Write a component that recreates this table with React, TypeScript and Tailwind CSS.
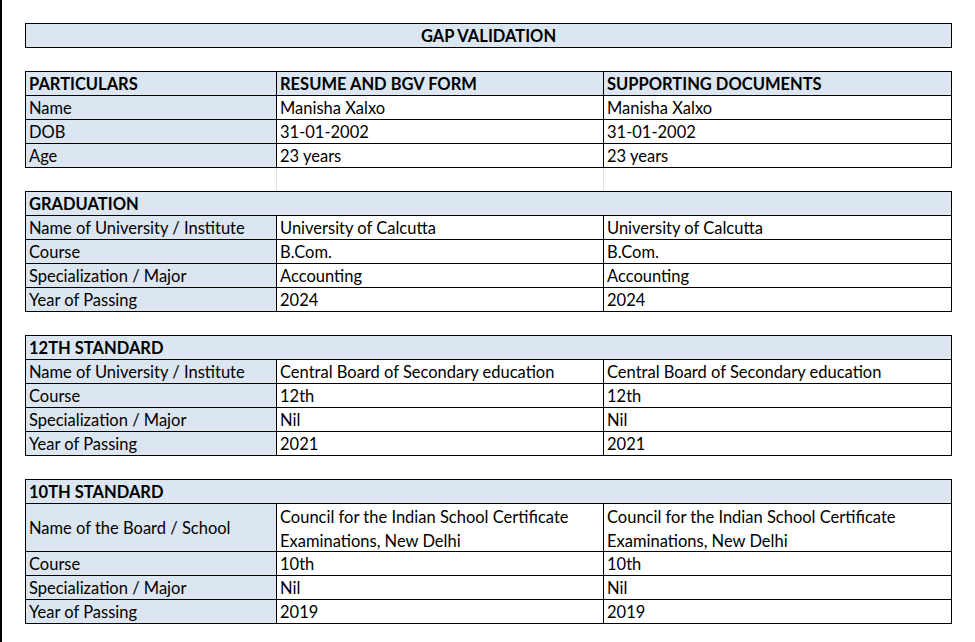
import React from "react";

type Row = { label: string; resume: React.ReactNode; docs: React.ReactNode; tall?: boolean };

type Section = { title: string; rows: Row[] };

const sections: Section[] = [
  {
    title: "GRADUATION",
    rows: [
      { label: "Name of University / Institute", resume: "University of Calcutta", docs: "University of Calcutta" },
      { label: "Course", resume: "B.Com.", docs: "B.Com." },
      { label: "Specialization / Major", resume: "Accounting", docs: "Accounting" },
      { label: "Year of Passing", resume: "2024", docs: "2024" },
    ],
  },
  {
    title: "12TH STANDARD",
    rows: [
      {
        label: "Name of University / Institute",
        resume: "Central Board of Secondary education",
        docs: "Central Board of Secondary education",
      },
      { label: "Course", resume: "12th", docs: "12th" },
      { label: "Specialization / Major", resume: "Nil", docs: "Nil" },
      { label: "Year of Passing", resume: "2021", docs: "2021" },
    ],
  },
  {
    title: "10TH STANDARD",
    rows: [
      {
        label: "Name of the Board / School",
        resume: (
          <>
            Council for the Indian School Certificate
            <br />
            Examinations, New Delhi
          </>
        ),
        docs: (
          <>
            Council for the Indian School Certificate
            <br />
            Examinations, New Delhi
          </>
        ),
        tall: true,
      },
      { label: "Course", resume: "10th", docs: "10th" },
      { label: "Specialization / Major", resume: "Nil", docs: "Nil" },
      { label: "Year of Passing", resume: "2019", docs: "2019" },
    ],
  },
];

const cell = "shrink-0 border-r border-black pl-[3px] whitespace-nowrap";

function DataRow({ row }: { row: Row }) {
  if (row.tall) {
    return (
      <div className="flex h-[48px] border-b border-black">
        <div className={`${cell} w-[251px] bg-[#dce6f1] flex items-center pt-[2px] leading-[23px]`}>{row.label}</div>
        <div className={`${cell} w-[327px] pt-[1px] leading-[24px]`}>{row.resume}</div>
        <div className={`${cell} w-[348px] pt-[1px] leading-[24px]`}>{row.docs}</div>
      </div>
    );
  }
  return (
    <div className="flex h-[24px] border-b border-black leading-[25px]">
      <div className={`${cell} w-[251px] bg-[#dce6f1]`}>{row.label}</div>
      <div className={`${cell} w-[327px]`}>{row.resume}</div>
      <div className={`${cell} w-[348px]`}>{row.docs}</div>
    </div>
  );
}

function SectionTable({ section }: { section: Section }) {
  return (
    <div className="w-[927px] border-l border-t border-black">
      <div className="h-[24px] border-b border-r border-black bg-[#dce6f1] pl-[3px] font-bold leading-[25px]">
        {section.title}
      </div>
      {section.rows.map((row) => (
        <DataRow key={row.label} row={row} />
      ))}
    </div>
  );
}

export default function App() {
  return (
    <div className="flex h-[642px] w-[975px] overflow-hidden bg-white font-['Lato',sans-serif] text-[16.5px] text-black">
      <div className="h-full w-[2px] shrink-0 bg-black" />
      <div className="flex flex-col gap-[23px] pl-[23px] pt-[23px]">
        <div className="h-[25px] w-[927px] border border-black bg-[#dce6f1] text-center font-bold leading-[25px]">
          GAP VALIDATION
        </div>

        <div className="flex flex-col">
          <div className="w-[927px] border-l border-t border-black">
            <div className="flex h-[24px] border-b border-black bg-[#dce6f1] font-bold leading-[25px]">
              <div className={`${cell} w-[251px]`}>PARTICULARS</div>
              <div className={`${cell} w-[327px]`}>RESUME AND BGV FORM</div>
              <div className={`${cell} w-[348px]`}>SUPPORTING DOCUMENTS</div>
            </div>
            <DataRow row={{ label: "Name", resume: "Manisha Xalxo", docs: "Manisha Xalxo" }} />
            <DataRow row={{ label: "DOB", resume: "31-01-2002", docs: "31-01-2002" }} />
            <DataRow row={{ label: "Age", resume: "23 years", docs: "23 years" }} />
          </div>
          {/* empty spreadsheet row, only the faint gridlines show */}
          <div className="flex h-[23px] pl-px">
            <div className="w-[251px] shrink-0 border-r border-[#e1e1e1]" />
            <div className="w-[327px] shrink-0 border-r border-[#e1e1e1]" />
          </div>
          <SectionTable section={sections[0]} />
        </div>

        <SectionTable section={sections[1]} />
        <SectionTable section={sections[2]} />
      </div>
    </div>
  );
}
